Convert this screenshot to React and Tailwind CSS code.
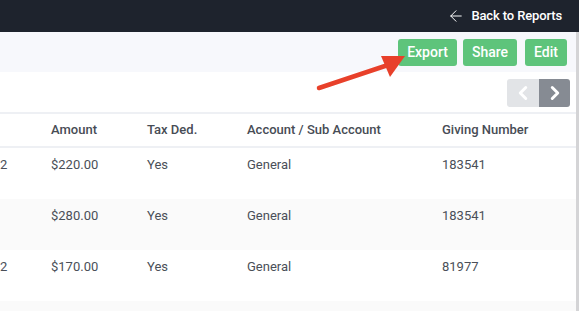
import React from 'react';
import { ArrowLeft, ChevronLeft, ChevronRight } from 'lucide-react';

const rows = [
  { date: '2', amount: '$220.00', tax: 'Yes', account: 'General', giving: '183541' },
  { date: '', amount: '$280.00', tax: 'Yes', account: 'General', giving: '183541' },
  { date: '2', amount: '$170.00', tax: 'Yes', account: 'General', giving: '81977' },
  { date: '', amount: '', tax: '', account: '', giving: '' },
];

const cols = 'grid grid-cols-[51px_96px_100px_195px_1fr]';

const App = () => {
  return (
    <div className="w-[579px] h-[311px] overflow-hidden bg-white font-['Roboto',sans-serif] relative">
      <div className="h-[32px] bg-[#1e232d] flex items-center justify-end pr-[17px]">
        <ArrowLeft size={18} strokeWidth={1.3} className="text-white mr-[6px]" />
        <span className="text-white text-[13px] font-medium tracking-[-0.01em]">Back to Reports</span>
      </div>

      <div className="flex h-[279px]">
        <div className="flex-1">
          <div className="h-[40px] bg-[#f7f8fc] flex items-center justify-end pr-[9px]">
            <button className="h-[27px] w-[59px] rounded-[3px] bg-[#5ec47b] text-white text-[14px] font-medium">Export</button>
            <button className="h-[27px] w-[54px] ml-[6px] rounded-[3px] bg-[#5ec47b] text-white text-[14px] font-medium">Share</button>
            <button className="h-[27px] w-[42px] ml-[8px] rounded-[3px] bg-[#5ec47b] text-white text-[14px] font-medium">Edit</button>
          </div>

          <div className="h-[40px] flex items-start justify-end pr-[6px] pt-[7px]">
            <div className="flex rounded-[3px] overflow-hidden">
              <div className="w-[32px] h-[28px] bg-[#e2e4e7] flex items-center justify-center">
                <ChevronLeft size={22} strokeWidth={3.2} className="text-white" />
              </div>
              <div className="w-[31px] h-[28px] bg-[#868b93] flex items-center justify-center">
                <ChevronRight size={22} strokeWidth={3.2} className="text-white" />
              </div>
            </div>
          </div>

          <div className="border-t-2 border-[#eef0f4]">
            <div className={`${cols} h-[34px] items-center border-b-2 border-[#eef0f4] text-[13px] font-medium text-[#474c55]`}>
              <div></div>
              <div>Amount</div>
              <div>Tax Ded.</div>
              <div>Account / Sub Account</div>
              <div>Giving Number</div>
            </div>
            {rows.map((r, i) => (
              <div key={i} className={`${cols} h-[51px] pt-[7px] text-[13px] text-[#4a4f58] ${i % 2 === 1 ? 'bg-[#fafafa]' : 'bg-white'}`}>
                <div>{r.date}</div>
                <div>{r.amount}</div>
                <div>{r.tax}</div>
                <div>{r.account}</div>
                <div>{r.giving}</div>
              </div>
            ))}
          </div>
        </div>
        <div className="w-[3px] bg-[#d4d4d6]"></div>
      </div>

      <svg className="absolute left-0 top-0 pointer-events-none" width="579" height="311">
        <line x1="319" y1="88" x2="388" y2="65" stroke="#e8402a" strokeWidth="4.5" strokeLinecap="round" />
        <polygon points="405,56 381,56 390,77" fill="#e8402a" />
      </svg>
    </div>
  );
};

export default App;
